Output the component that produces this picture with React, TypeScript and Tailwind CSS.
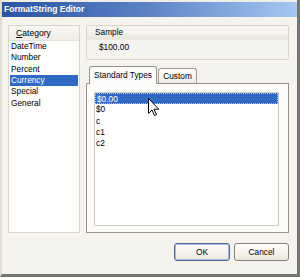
import React from 'react';

const categories = ['DateTime', 'Number', 'Percent', 'Currency', 'Special', 'General'];
const formats = ['$0.00', '$0', 'c', 'c1', 'c2'];

function App() {
  return (
    <div className="relative w-[300px] h-[277px] overflow-hidden bg-[#f4f3ee] border-l-[2px] border-l-[#dedcd4] border-r-[3px] border-r-[#77756f] border-b-[3px] border-b-[#77756f] font-['Liberation_Sans',Arial,sans-serif] text-[8.3px] text-black">
      <div className="h-[2px] bg-[#efeee8]" />
      <div className="h-[15px] -ml-[2px] flex items-center pl-[4px] bg-gradient-to-r from-[#2953a3] via-[#5d83c6] to-[#a6c8f1] text-white font-bold text-[8.5px]">
        FormatString Editor
      </div>

      <div className="flex gap-[6px] pl-[6px] pr-[8px] pt-[8px]">
        {/* category list */}
        <div className="w-[72px] h-[208px] flex flex-col border border-[#d9d5ca] bg-[#fdfdfb]">
          <div className="h-[15px] flex items-center pl-[7px] bg-gradient-to-b from-[#f8f7f3] to-[#efede6] border-b border-[#e4e1d8] text-[8.6px]">
            <span className="underline">C</span>ategory
          </div>
          <div className="px-[1px]">
            {categories.map((c) => (
              <div
                key={c}
                className={
                  c === 'Currency'
                    ? 'h-[11.33px] leading-[11.33px] pl-[1px] bg-[#316ac5] text-white'
                    : 'h-[11.33px] leading-[11.33px] pl-[1px]'
                }
              >
                {c}
              </div>
            ))}
          </div>
        </div>

        {/* right side */}
        <div className="w-[203px] flex flex-col">
          <div className="h-[35px] flex flex-col border border-[#d9d5ca] rounded-[2px]">
            <div className="h-[14px] flex items-center pl-[8px] bg-gradient-to-b from-[#f7f6f2] via-[#f3f2ed] to-[#e7e4db] border-b border-[#ece9e1]">
              Sample
            </div>
            <div className="pl-[12px] mt-[1px] leading-[12px]">$100.00</div>
          </div>

          <div className="mt-[6px] h-[17px] flex items-end pl-[3px]">
            <div className="relative z-10 -mb-[1px] w-[68px] h-[18px] flex items-center justify-center border border-b-0 border-[#9c918a] rounded-t-[3px] bg-[#fbfbf9]">
              Standard Types
            </div>
            <div className="ml-[1px] w-[39px] h-[15px] flex items-center justify-center border border-b-0 border-[#a59a93] rounded-t-[3px] bg-gradient-to-b from-[#fefefd] to-[#ecebe5]">
              Custom
            </div>
          </div>

          <div className="h-[150px] border border-[#9c918a] bg-[#fbfbf9] pt-[8px] pl-[7px]">
            <div className="w-[185px] h-[134px] border border-[#cfccc3] bg-[#fdfdfc]">
              {formats.map((f, i) => (
                <div
                  key={f}
                  className={
                    i === 0
                      ? 'h-[11.33px] leading-[10px] pl-[1px] bg-[#316ac5] text-white border border-dotted border-[#a8bfe6]'
                      : 'h-[11.33px] leading-[11.33px] pl-[1px]'
                  }
                >
                  {f}
                </div>
              ))}
            </div>
          </div>

          <div className="mt-[10px] flex justify-end gap-[4px]">
            <button className="w-[56px] h-[18px] rounded-[3px] border border-[#5b6b86] bg-gradient-to-b from-[#ffffff] to-[#ece9dc] shadow-[inset_0_0_0_1px_#9ebcf0] text-[8.3px] text-black">
              OK
            </button>
            <button className="w-[55px] h-[18px] rounded-[3px] border border-[#8a807a] bg-gradient-to-b from-[#ffffff] to-[#ece9dc] text-[8.3px] text-black">
              Cancel
            </button>
          </div>
        </div>
      </div>

      {/* mouse pointer */}
      <svg className="absolute left-[146px] top-[98px]" width="12" height="19" viewBox="0 0 12 19">
        <path d="M0.5 0.5 L0.5 15.5 L4 12 L6.5 17.5 L8.5 16.6 L6 11.2 L10.8 11.2 Z" fill="#ffffff" stroke="#000000" strokeWidth="1" strokeLinejoin="miter" />
      </svg>
    </div>
  );
}

export default App;
